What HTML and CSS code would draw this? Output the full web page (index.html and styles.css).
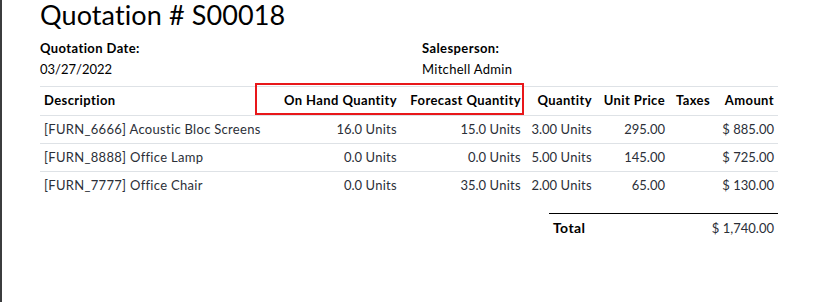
FILE: index.html
```html
<!DOCTYPE html>
<html lang="en">
<head>
<meta charset="utf-8">
<title>Quotation # S00018</title>
<link rel="stylesheet" href="styles.css">
</head>
<body>
<div class="page">
  <h1 class="doc-title">Quotation # S00018</h1>

  <div class="info">
    <div class="field">
      <div class="field-label">Quotation Date:</div>
      <div class="field-value">03/27/2022</div>
    </div>
    <div class="field">
      <div class="field-label">Salesperson:</div>
      <div class="field-value text">Mitchell Admin</div>
    </div>
  </div>

  <div class="lines">
    <table class="lines-table">
      <colgroup>
        <col class="c-desc">
        <col class="c-onhand">
        <col class="c-forecast">
        <col class="c-qty">
        <col class="c-price">
        <col class="c-taxes">
        <col class="c-amount">
      </colgroup>
      <thead>
        <tr>
          <th class="left">Description</th>
          <th>On Hand Quantity</th>
          <th>Forecast Quantity</th>
          <th>Quantity</th>
          <th>Unit Price</th>
          <th>Taxes</th>
          <th>Amount</th>
        </tr>
      </thead>
      <tbody>
        <tr>
          <td class="left text">[FURN_6666] Acoustic Bloc Screens</td>
          <td>16.0 <span class="text">Units</span></td>
          <td>15.0 <span class="text">Units</span></td>
          <td>3.00 <span class="text">Units</span></td>
          <td>295.00</td>
          <td></td>
          <td>$&nbsp;885.00</td>
        </tr>
        <tr>
          <td class="left text">[FURN_8888] Office Lamp</td>
          <td>0.0 <span class="text">Units</span></td>
          <td>0.0 <span class="text">Units</span></td>
          <td>5.00 <span class="text">Units</span></td>
          <td>145.00</td>
          <td></td>
          <td>$&nbsp;725.00</td>
        </tr>
        <tr>
          <td class="left text">[FURN_7777] Office Chair</td>
          <td>0.0 <span class="text">Units</span></td>
          <td>35.0 <span class="text">Units</span></td>
          <td>2.00 <span class="text">Units</span></td>
          <td>65.00</td>
          <td></td>
          <td>$&nbsp;130.00</td>
        </tr>
      </tbody>
    </table>
    <div class="highlight"></div>
  </div>

  <div class="totals">
    <span class="totals-label">Total</span>
    <span class="totals-value">$&nbsp;1,740.00</span>
  </div>
</div>
</body>
</html>
```

FILE: styles.css
```css
html, body {
  margin: 0;
  padding: 0;
  background: #fff;
}

body {
  font-family: Lato, "Open Sans", "Liberation Sans", sans-serif;
  font-size: 13px;
  color: #212529;
}

.page {
  box-sizing: border-box;
  min-height: 100vh;
  border-left: 2px solid #3b3c3e;
  padding: 0 37px 0 38px;
}

.doc-title {
  margin: 0;
  font-size: 27px;
  line-height: 30px;
  font-weight: 400;
  letter-spacing: 0.1px;
  color: #000;
}

.info {
  display: grid;
  grid-template-columns: 382px auto;
  margin-top: 8px;
  line-height: 21px;
}

.field-label {
  font-weight: 700;
  letter-spacing: 0.4px;
  color: #000;
}

.field-value {
  color: #000;
}

/* words get a touch of extra tracking; figures keep their natural width */
.text {
  letter-spacing: 0.3px;
}

.lines {
  position: relative;
  width: 738px;
  margin-top: 6px;
}

.lines-table {
  width: 738px;
  table-layout: fixed;
  border-collapse: separate;
  border-spacing: 0;
  line-height: 19px;
}

.c-desc { width: 240px; }
.c-onhand { width: 121px; }
.c-forecast { width: 124px; }
.c-qty { width: 71px; }
.c-price { width: 73px; }
.c-taxes { width: 45px; }
.c-amount { width: 64px; }

.lines-table th,
.lines-table td {
  padding: 4px 4px;
  text-align: right;
  white-space: nowrap;
  vertical-align: top;
}

.lines-table th {
  font-weight: 700;
  letter-spacing: 0.4px;
  color: #000;
  padding-bottom: 5px;
  border-top: 1px solid #dee2e6;
  border-bottom: 1px solid #dee2e6;
}

.lines-table td {
  color: #2b2f38;
}

.lines-table tbody tr + tr td {
  border-top: 1px solid #dee2e6;
}

.lines-table .left {
  text-align: left;
}

/* red frame around the two stock columns */
.highlight {
  position: absolute;
  left: 215px;
  top: -3px;
  width: 269px;
  height: 32px;
  box-sizing: border-box;
  border: 2px solid #e8171a;
}

.totals {
  display: flex;
  justify-content: space-between;
  align-items: baseline;
  width: 229px;
  box-sizing: border-box;
  margin: 14px 0 0 509px;
  padding: 4px;
  line-height: 19px;
  border-top: 1px solid #000;
}

.totals-label {
  font-size: 14px;
  font-weight: 700;
  letter-spacing: 0.4px;
  color: #000;
}

.totals-value {
  color: #2b2f38;
}
```
